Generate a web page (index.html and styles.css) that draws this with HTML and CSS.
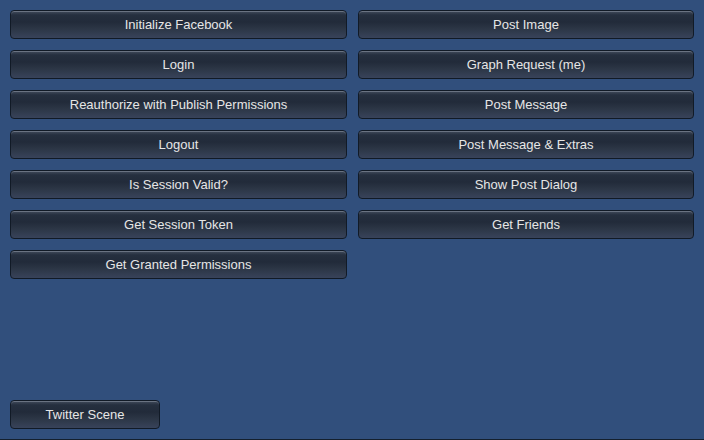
FILE: index.html
```html
<!DOCTYPE html>
<html>
<head>
<meta charset="utf-8">
<link rel="stylesheet" href="styles.css">
</head>
<body>
<div class="screen">
  <div class="grid">
    <div class="col">
      <button class="btn">Initialize Facebook</button>
      <button class="btn">Login</button>
      <button class="btn">Reauthorize with Publish Permissions</button>
      <button class="btn">Logout</button>
      <button class="btn">Is Session Valid?</button>
      <button class="btn">Get Session Token</button>
      <button class="btn">Get Granted Permissions</button>
    </div>
    <div class="col right">
      <button class="btn">Post Image</button>
      <button class="btn">Graph Request (me)</button>
      <button class="btn">Post Message</button>
      <button class="btn">Post Message &amp; Extras</button>
      <button class="btn">Show Post Dialog</button>
      <button class="btn">Get Friends</button>
    </div>
  </div>
  <div class="footer">
    <button class="btn small">Twitter Scene</button>
  </div>
</div>
</body>
</html>
```
FILE: styles.css
```css
html, body {
  margin: 0;
  padding: 0;
  background: #314f7c;
}
.screen {
  width: 704px;
  height: 440px;
  box-sizing: border-box;
  border-bottom: 1px solid #14202e;
  display: flex;
  flex-direction: column;
  justify-content: space-between;
  padding: 10px 10px 10px 10px;
  font-family: "Liberation Sans", Arial, sans-serif;
}
.grid {
  display: flex;
  gap: 11px;
}
.col {
  width: 337px;
  display: flex;
  flex-direction: column;
  gap: 11px;
}
.col.right {
  width: 336px;
}
.btn {
  height: 29px;
  margin: 0;
  padding: 0;
  border: 1px solid #111a26;
  border-radius: 4px;
  background: linear-gradient(to bottom, #5d6674 0px, #3b4555 1px, #252f3f 4px, #222b3a 11px, #2c3646 18px, #38435a 27px);
  box-shadow: inset 0 1px 0 #6a7382;
  color: #e6e6e6;
  font-family: "Liberation Sans", Arial, sans-serif;
  font-size: 13px;
  line-height: 27px;
  text-align: center;
  white-space: nowrap;
}
.footer {
  display: flex;
}
.btn.small {
  width: 150px;
}
```
